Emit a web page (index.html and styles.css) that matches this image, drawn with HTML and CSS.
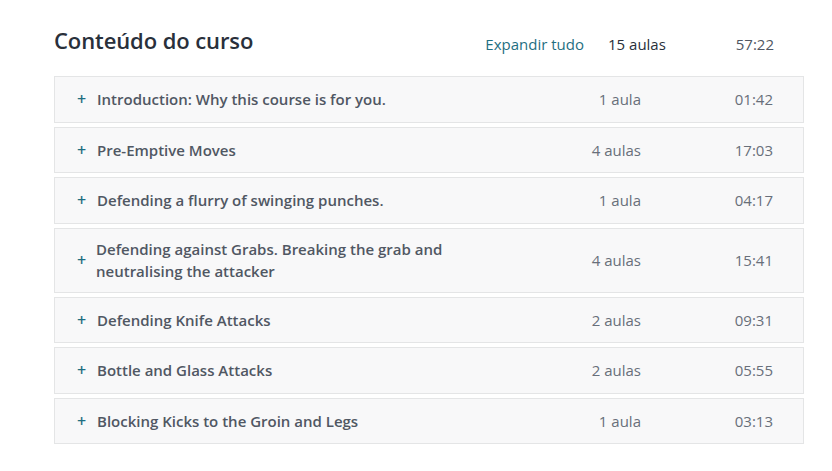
FILE: index.html
```html
<!DOCTYPE html>
<html lang="pt">
<head>
<meta charset="utf-8">
<link rel="stylesheet" href="styles.css">
</head>
<body>
<div class="course">
  <div class="head">
    <h2 class="title">Conteúdo do curso</h2>
    <div class="head-meta">
      <span class="expand">Expandir tudo</span>
      <span class="total">15 aulas</span>
      <span class="time">57:22</span>
    </div>
  </div>
  <div class="sections">
    <div class="row"><span class="plus">+</span><span class="name">Introduction: Why this course is for you.</span><span class="count">1 aula</span><span class="time">01:42</span></div>
    <div class="row"><span class="plus">+</span><span class="name">Pre-Emptive Moves</span><span class="count">4 aulas</span><span class="time">17:03</span></div>
    <div class="row"><span class="plus">+</span><span class="name">Defending a flurry of swinging punches.</span><span class="count">1 aula</span><span class="time">04:17</span></div>
    <div class="row tall"><span class="plus">+</span><span class="name">Defending against Grabs. Breaking the grab and neutralising the attacker</span><span class="count">4 aulas</span><span class="time">15:41</span></div>
    <div class="row"><span class="plus">+</span><span class="name">Defending Knife Attacks</span><span class="count">2 aulas</span><span class="time">09:31</span></div>
    <div class="row"><span class="plus">+</span><span class="name">Bottle and Glass Attacks</span><span class="count">2 aulas</span><span class="time">05:55</span></div>
    <div class="row"><span class="plus">+</span><span class="name">Blocking Kicks to the Groin and Legs</span><span class="count">1 aula</span><span class="time">03:13</span></div>
  </div>
</div>
</body>
</html>
```

FILE: styles.css
```css
* { box-sizing: border-box; }
body {
  margin: 0;
  background: #fff;
  font-family: "Open Sans", "Liberation Sans", sans-serif;
  color: #505763;
}
.course {
  width: 750px;
  margin-left: 54px;
  padding-top: 21px;
}
.head {
  display: flex;
  align-items: center;
  justify-content: space-between;
  height: 38px;
  margin-bottom: 17px;
}
.title {
  margin: 0;
  font-size: 22px;
  font-weight: 600;
  color: #29303b;
  letter-spacing: -0.1px;
}
.head-meta {
  display: flex;
  align-items: center;
  font-size: 15px;
  padding-top: 8px;
}
.expand { color: #1f6f82; margin-right: 24px; }
.total { color: #29303b; width: 58px; }
.head-meta .time { color: #505763; width: 138px; text-align: right; padding-right: 30px; }
.sections {
  display: flex;
  flex-direction: column;
  gap: 4px;
}
.row {
  display: flex;
  align-items: center;
  min-height: 46.5px;
  background: #f8f8f9;
  border: 1px solid #e4e5e6;
  padding: 0 30px 0 22px;
  font-size: 15px;
}
.row.tall { min-height: 65px; }
.plus {
  color: #1f6f82;
  font-weight: 600;
  width: 20px;
  font-size: 16px;
  flex: none;
}
.row.tall .plus { width: 19px; }
.name {
  flex: 1;
  font-weight: 600;
  color: #505763;
  line-height: 22px;
  padding-right: 100px;
}
.count {
  width: 80px;
  text-align: right;
  color: #686f7a;
  flex: none;
}
.row .time {
  width: 132px;
  text-align: right;
  color: #686f7a;
  flex: none;
}
```
